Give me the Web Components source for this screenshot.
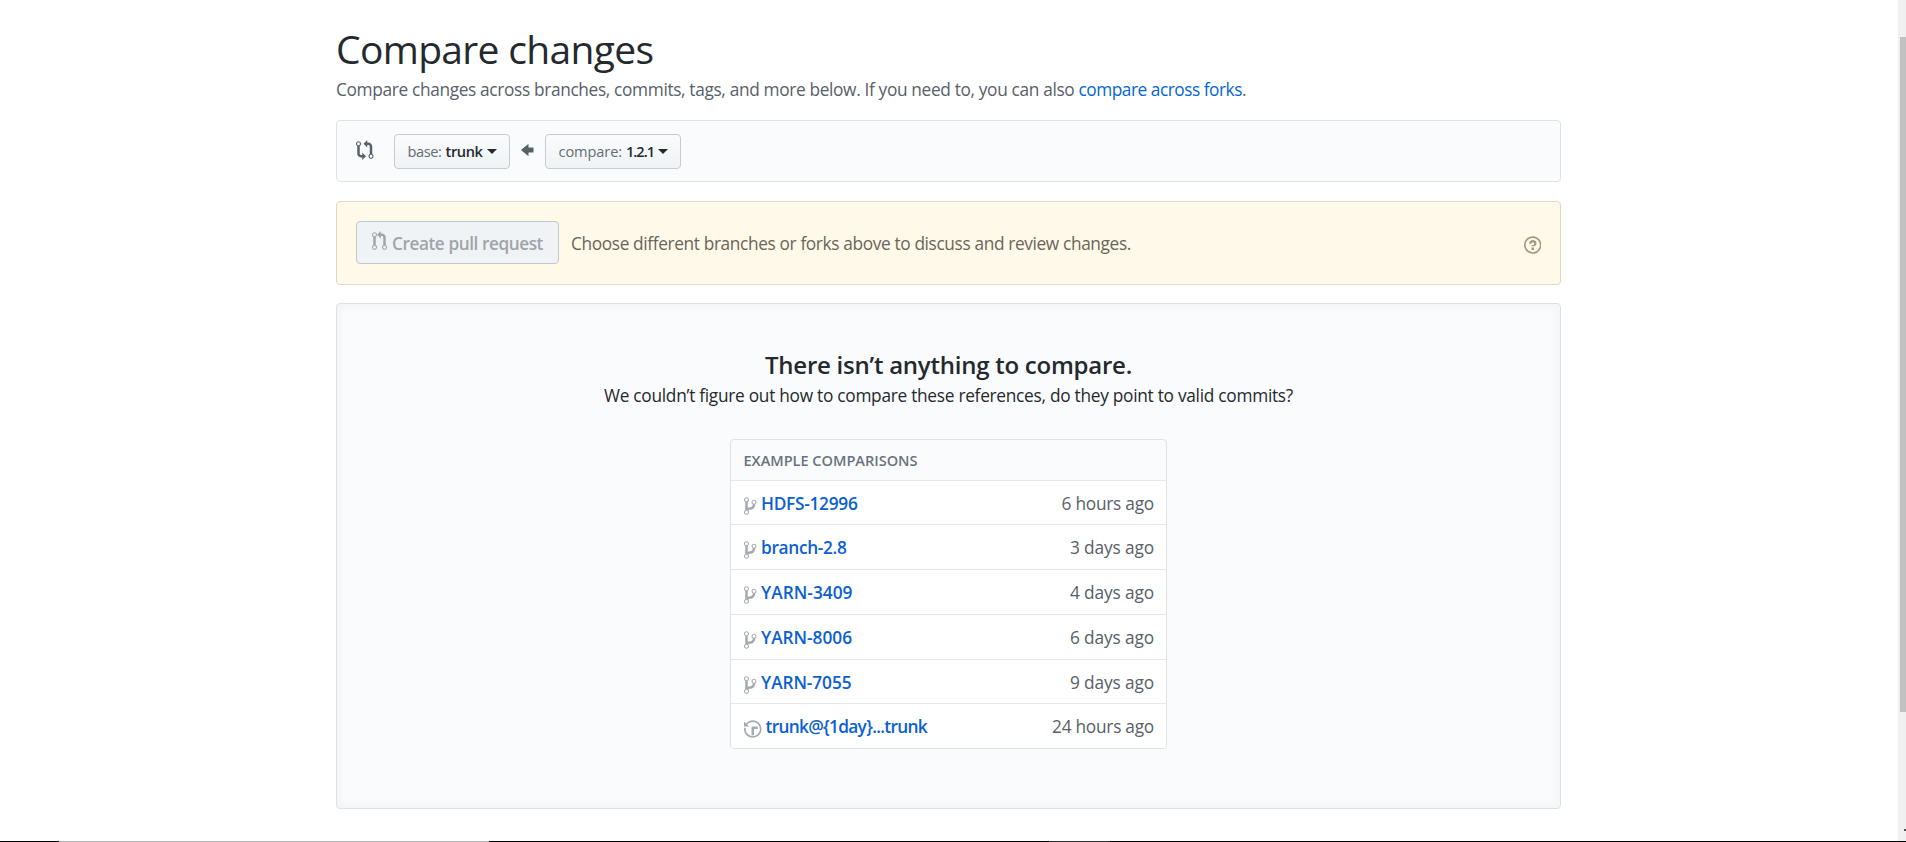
<!DOCTYPE html>
<html lang="en">
<head>
<meta charset="utf-8">
<title>Compare changes</title>
<style>
html, body { margin: 0; height: 100%; overflow: hidden; background: #fff; }
body { font-family: "Open Sans", "Noto Sans", sans-serif; font-size: 17.3px; color: #24292e; }
</style>
</head>
<body>
<compare-app></compare-app>
<script>
const define = (name, html, setup) => {
  const template = document.createElement('template');
  template.innerHTML = html;
  customElements.define(name, class extends HTMLElement {
    connectedCallback() {
      if (this.shadowRoot) return;
      this.attachShadow({ mode: 'open' }).append(template.content.cloneNode(true));
      if (setup) setup(this, this.shadowRoot);
    }
  });
};

const ICONS = {
  compare: [14, 'M5 12H4c-.27-.02-.48-.11-.69-.31-.21-.2-.3-.42-.31-.69V4.72A1.993 1.993 0 0 0 2 1a1.993 1.993 0 0 0-1 3.72V11c.03.78.34 1.47.94 2.06.6.59 1.28.91 2.06.94h1v2l3-3-3-3v2zM2 1.8c.66 0 1.2.55 1.2 1.2 0 .65-.55 1.2-1.2 1.2C1.35 4.2.8 3.65.8 3c0-.65.55-1.2 1.2-1.2zm11 9.48V5c-.03-.78-.34-1.47-.94-2.06-.6-.59-1.28-.91-2.06-.94H9V0L6 3l3 3V4h1c.27.02.48.11.69.31.21.2.3.42.31.69v6.28A1.993 1.993 0 0 0 12 15a1.993 1.993 0 0 0 1-3.72zm-1 2.92c-.66 0-1.2-.55-1.2-1.2 0-.65.55-1.2 1.2-1.2.65 0 1.2.55 1.2 1.2 0 .65-.55 1.2-1.2 1.2z'],
  arrow: [10, 'M6 3L0 8l6 5v-3h4V6H6V3z'],
  pull: [12, 'M11 11.28V5c-.03-.78-.34-1.47-.94-2.06C9.46 2.35 8.78 2.03 8 2H7V0L4 3l3 3V4h1c.27.02.48.11.69.31.21.2.3.42.31.69v6.28A1.993 1.993 0 0 0 10 15a1.993 1.993 0 0 0 1-3.72zm-1 2.92c-.66 0-1.2-.55-1.2-1.2 0-.65.55-1.2 1.2-1.2.65 0 1.2.55 1.2 1.2 0 .65-.55 1.2-1.2 1.2zM4 3c0-1.11-.89-2-2-2a1.993 1.993 0 0 0-1 3.72v6.56A1.993 1.993 0 0 0 2 15a1.993 1.993 0 0 0 1-3.72V4.72c.59-.34 1-.98 1-1.72zm-.8 10c0 .66-.55 1.2-1.2 1.2-.65 0-1.2-.55-1.2-1.2 0-.65.55-1.2 1.2-1.2.65 0 1.2.55 1.2 1.2zM2 4.2C1.34 4.2.8 3.65.8 3c0-.65.55-1.2 1.2-1.2.65 0 1.2.55 1.2 1.2 0 .65-.55 1.2-1.2 1.2z'],
  question: [14, 'M6 10h2v2H6v-2zm4-3.5C10 8.64 8 9 8 9H6c0-.55.45-1 1-1h.5c.28 0 .5-.22.5-.5v-1c0-.28-.22-.5-.5-.5h-1c-.28 0-.5.22-.5.5V7H4c0-1.5 1.5-3 3-3s3 1 3 2.5zM7 2.3c3.14 0 5.7 2.56 5.7 5.7s-2.56 5.7-5.7 5.7A5.71 5.71 0 0 1 1.3 8c0-3.14 2.56-5.7 5.7-5.7zM7 1C3.14 1 0 4.14 0 8s3.14 7 7 7 7-3.14 7-7-3.14-7-7-7z'],
  branch: [10, 'M10 5c0-1.11-.89-2-2-2a1.993 1.993 0 0 0-1 3.72v.3c-.02.52-.23.98-.63 1.38-.4.4-.86.61-1.38.63-.83.02-1.48.16-2 .45V4.72a1.993 1.993 0 0 0-1-3.72C.88 1 0 1.89 0 3a2 2 0 0 0 1 1.72v6.56c-.59.35-1 .99-1 1.72 0 1.11.89 2 2 2 1.11 0 2-.89 2-2 0-.53-.2-1-.53-1.36.09-.06.48-.41.59-.47.25-.11.56-.17.94-.17 1.05-.05 1.95-.45 2.75-1.25S8.95 7.77 9 6.73h-.02C9.59 6.37 10 5.73 10 5zM2 1.8c.66 0 1.2.55 1.2 1.2 0 .65-.55 1.2-1.2 1.2C1.35 4.2.8 3.65.8 3c0-.65.55-1.2 1.2-1.2zm0 12.41c-.66 0-1.2-.55-1.2-1.2 0-.65.55-1.2 1.2-1.2.65 0 1.2.55 1.2 1.2 0 .65-.55 1.2-1.2 1.2zm6-8c-.66 0-1.2-.55-1.2-1.2 0-.65.55-1.2 1.2-1.2.65 0 1.2.55 1.2 1.2 0 .65-.55 1.2-1.2 1.2z'],
  history: [14, 'M8 13H6V6h5v2H8v5zM7 1C4.81 1 2.87 2.02 1.59 3.59L0 2v4h4L2.5 4.5C3.55 3.17 5.17 2.3 7 2.3c3.14 0 5.7 2.56 5.7 5.7s-2.56 5.7-5.7 5.7A5.71 5.71 0 0 1 1.3 8c0-.34.03-.67.09-1H.08C.03 7.33 0 7.66 0 8c0 3.86 3.14 7 7 7s7-3.14 7-7-3.14-7-7-7z']
};

define('octo-icon', `<style>:host{display:block;flex:none;height:20px}svg{display:block;fill:currentColor;height:20px}</style>`, (host, root) => {
  const [w, d] = ICONS[host.getAttribute('name')];
  root.innerHTML += `<svg width="${w * 1.25}" height="20" viewBox="0 0 ${w} 16"><path fill-rule="evenodd" d="${d}"/></svg>`;
});

/* Text run whose tracking is adjusted so that it spans the "span" attribute, in pixels. */
define('fit-text', `<style>:host{display:inline-block;white-space:nowrap;flex:none}</style><slot></slot>`, host => {
  const span = +host.getAttribute('span');
  const gap = (span - host.getBoundingClientRect().width) / host.textContent.length;
  host.style.letterSpacing = gap.toFixed(4) + 'px';
});

define('page-heading', `<style>
:host{display:block}
h1{margin:0;font-size:39px;font-weight:400;line-height:57px}
p{margin:0 0 18px;line-height:25px;color:#586069}
a{color:#0366d6;text-decoration:none}
</style>
<h1><fit-text span="317.5">Compare changes</fit-text></h1>
<p><fit-text span="742.5">Compare changes across branches, commits, tags, and more below. If you need to, you can also&nbsp;</fit-text><a><fit-text span="163.5">compare across forks</fit-text></a>.</p>`);

define('branch-select', `<style>
:host{display:flex;box-sizing:border-box;height:35px;padding:0 12px 0 13px;align-items:center;border:1px solid #c6cbd1;border-radius:4px;background:linear-gradient(#fafbfc,#eff3f6);font-size:14.6px;line-height:23px}
i{color:#666c73;font-style:normal;font-weight:500;margin-right:4px;display:block}
b{font-weight:560;display:block}
s{width:0;height:0;border:5px solid transparent;border-top-color:#24292e;border-bottom:0;margin:0 0 0 4px}
</style><i><slot name="label"></slot></i><b><slot></slot></b><s></s>`);

define('range-editor', `<style>
:host{display:flex;box-sizing:border-box;height:62px;margin-bottom:19px;padding:0 19px;align-items:center;border:1px solid #dfe2e5;border-radius:4px;background:#fafbfc;color:#586069}
branch-select{color:#24292e;margin-top:1px}
.cmp{margin:-3px 20px 0 0}.arr{margin:-2px 11px 0 11.5px}
</style>
<octo-icon class="cmp" name="compare"></octo-icon>
<branch-select><fit-text slot="label" span="34">base:</fit-text><fit-text span="37">trunk</fit-text></branch-select>
<octo-icon class="arr" name="arrow"></octo-icon>
<branch-select><fit-text slot="label" span="63.5">compare:</fit-text><fit-text span="28">1.2.1</fit-text></branch-select>`);

define('pull-banner', `<style>
:host{display:flex;box-sizing:border-box;height:84px;margin-bottom:18px;padding:19px;border:1px solid #dfd8c2;border-radius:4px;background:#fff9ea;color:#6a6559}
button{display:flex;box-sizing:border-box;width:203px;height:43px;margin:0 12px 0 0;padding:0 0 0 15px;align-items:center;border:1px solid #c3c8cf;border-radius:4px;background:#eff3f6;color:#a0a4a9;font:560 17.2px/26px "Open Sans","Noto Sans",sans-serif}
button octo-icon{margin:-3px 5px 0 0}
button fit-text{margin-top:2px}
p{flex:1;margin:0;line-height:43px;padding-top:1px}
.help{margin-top:14px;color:#a29a80}
</style>
<button disabled><octo-icon name="pull"></octo-icon><fit-text span="151">Create pull request</fit-text></button>
<p><fit-text span="560">Choose different branches or forks above to discuss and review changes.</fit-text></p>
<octo-icon class="help" name="question"></octo-icon>`);

define('example-row', `<style>
:host{display:flex;box-sizing:border-box;height:45px;padding:0 12px 0 13px;border-top:1px solid #e6e8eb;background:#fff;line-height:46px}
octo-icon{color:#a3aab1;margin:15px 4.5px 0 0}
:host([icon=history]) octo-icon{margin-right:4px}
a{flex:1;color:#0b60d2;font-weight:560}
span{color:#586069}
</style><span id="icon"></span><a><slot></slot></a><span><slot name="time"></slot></span>`, (host, root) => {
  root.getElementById('icon').innerHTML = `<octo-icon name="${host.getAttribute('icon')}"></octo-icon>`;
});

const ROWS = [
  ['branch', 'HDFS-12996', 96.5, '6 hours ago', 92.5],
  ['branch', 'branch-2.8', 85.5, '3 days ago', 84],
  ['branch', 'YARN-3409', 91.5, '4 days ago', 84],
  ['branch', 'YARN-8006', 91, '6 days ago', 84],
  ['branch', 'YARN-7055', 90.5, '9 days ago', 84],
  ['history', 'trunk@{1day}...trunk', 161.5, '24 hours ago', 102]
];

define('example-list', `<style>
:host{display:block;box-sizing:border-box;width:437px;border:1px solid #dfe2e5;border-radius:4px;overflow:hidden}
header{height:40px;line-height:40px;padding-left:12.5px;font-size:14.6px;font-weight:560;color:#6a737d}
example-row:first-of-type{height:44px}
example-row:nth-of-type(5){height:44px}
</style>
<header><fit-text span="174">EXAMPLE COMPARISONS</fit-text></header>
${ROWS.map(r => `<example-row icon="${r[0]}"><fit-text span="${r[2]}">${r[1]}</fit-text><fit-text slot="time" span="${r[4]}">${r[3]}</fit-text></example-row>`).join('')}`);

define('blank-slate', `<style>
:host{display:flex;flex-direction:column;align-items:center;box-sizing:border-box;height:506px;padding-top:43px;border:1px solid #dfe2e5;border-radius:4px;background:#fafbfc;box-shadow:inset 0 0 12px rgba(27,31,35,.05)}
h3{margin:0;font-size:24px;font-weight:570;line-height:36px}
p{margin:0;line-height:26px}
example-list{margin-top:30px}
</style>
<h3><fit-text span="367">There isn’t anything to compare.</fit-text></h3>
<p><fit-text span="689">We couldn’t figure out how to compare these references, do they point to valid commits?</fit-text></p>
<example-list></example-list>`);

define('scroll-bar', `<style>
:host{display:block;box-sizing:border-box;width:8px;padding:37px 0 0 2px;background:#f0f0f0}
div{height:675px;background:#c1c1c1}
i{display:block;width:2px;height:2px;margin:117px 0 0 auto;background:#505050}
</style><div></div><i></i>`);

define('task-strip', `<style>
:host{display:flex;height:1px;background:#000}
i{width:430px;margin-left:59px;background:#bbb}
b{width:61px;margin-left:560px;background:#333}
</style><i></i><b></b>`);

define('compare-app', `<style>
:host{display:flex;flex-direction:column;height:842px}
.view{display:flex;height:841px}
main{flex:1;box-sizing:border-box;padding:20px 337px 0 336px}
</style>
<div class="view"><main>
<page-heading></page-heading><range-editor></range-editor><pull-banner></pull-banner><blank-slate></blank-slate>
</main><scroll-bar></scroll-bar></div>
<task-strip></task-strip>`);
</script>
</body>
</html>
